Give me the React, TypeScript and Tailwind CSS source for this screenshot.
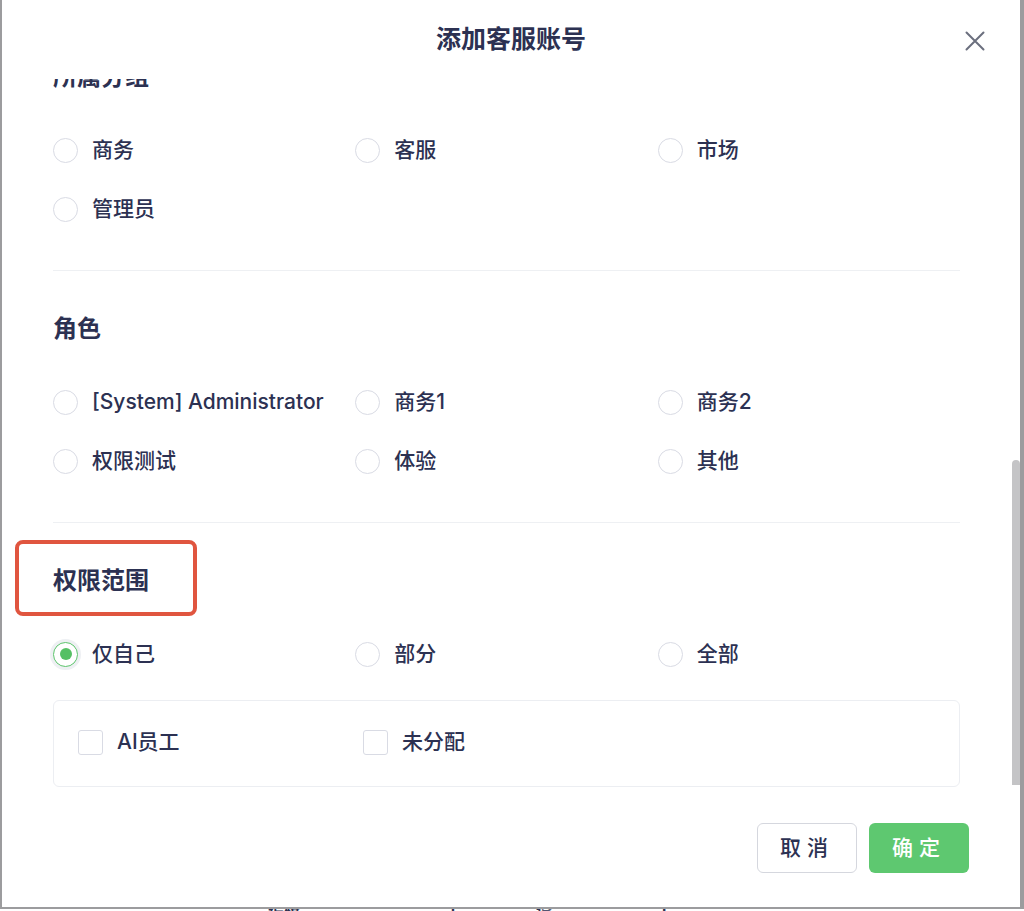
import React from 'react';

const font = { fontFamily: 'Inter, "Noto Sans CJK SC", "Noto Sans", sans-serif' };

type Option = { label: string; checked?: boolean };

const groupOptions: Option[] = [
  { label: '商务' },
  { label: '客服' },
  { label: '市场' },
  { label: '管理员' },
];

const roleOptions: Option[] = [
  { label: '[System] Administrator' },
  { label: '商务1' },
  { label: '商务2' },
  { label: '权限测试' },
  { label: '体验' },
  { label: '其他' },
];

const scopeOptions: Option[] = [
  { label: '仅自己', checked: true },
  { label: '部分' },
  { label: '全部' },
];

function Radio({ label, checked }: Option) {
  return (
    <label className="flex h-[26px] items-center gap-[14px]">
      {checked ? (
        <span className="flex h-[25px] w-[25px] items-center justify-center rounded-full border border-[#5cc46c] bg-white shadow-[0_0_0_3px_#eef0f3]">
          <span className="h-[12px] w-[12px] rounded-full bg-[#55c064]" />
        </span>
      ) : (
        <span className="h-[25px] w-[25px] rounded-full border border-[#d9dbe4] bg-white" />
      )}
      <span className="whitespace-nowrap text-[21px] font-medium leading-[26px] text-[#2c3152]">{label}</span>
    </label>
  );
}

function Checkbox({ label }: { label: string }) {
  return (
    <label className="flex w-[285px] items-center gap-[14px]">
      <span className="h-[25px] w-[25px] rounded-[3px] border border-[#d9dbe4] bg-white" />
      <span className="text-[21px] font-medium leading-[26px] text-[#2c3152]">{label}</span>
    </label>
  );
}

function Section({
  title,
  options,
  first,
  highlight,
}: {
  title: string;
  options: Option[];
  first?: boolean;
  highlight?: boolean;
}) {
  return (
    <div>
      <div className={`relative h-[30px] ${first ? '' : 'mt-[43px]'}`}>
        <h3 className="text-[24px] font-bold leading-[30px] text-[#2c3152]">{title}</h3>
        {highlight && (
          <div className="absolute left-[-38px] top-[-26px] h-[76px] w-[182px] rounded-[8px] border-[4px] border-[#e0553f]" />
        )}
      </div>
      <div className="mt-[45px] grid grid-cols-3 gap-y-[33px]">
        {options.map((o) => (
          <Radio key={o.label} {...o} />
        ))}
      </div>
    </div>
  );
}

export default function App() {
  return (
    <div className="h-[911px] w-[1024px] overflow-hidden bg-white" style={font}>
      <div className="relative flex h-[909px] flex-col border-b-2 border-l-2 border-r-4 border-[#9c9c9e] bg-white">
        {/* Header */}
        <div className="relative z-10 flex h-[79px] shrink-0 items-center justify-center bg-white">
          <h2 className="text-[25px] font-semibold text-[#2c3152]">添加客服账号</h2>
          <button className="absolute right-[35px] top-[31px] text-[#6b6f7e]">
            <svg width="20" height="20" viewBox="0 0 20 20" fill="none" stroke="currentColor" strokeWidth="2" strokeLinecap="round">
              <path d="M1.5 1.5L18.5 18.5M18.5 1.5L1.5 18.5" />
            </svg>
          </button>
        </div>

        {/* Body */}
        <div className="relative h-[721px] shrink-0 overflow-hidden">
          <div className="-mt-[17px] pl-[51px] pr-[60px]">
            <Section title="所属分组" options={groupOptions} first />
            <div className="mt-[48px] h-px bg-[#eef0f3]" />
            <Section title="角色" options={roleOptions} />
            <div className="mt-[48px] h-px bg-[#eef0f3]" />
            <Section title="权限范围" options={scopeOptions} highlight />
            <div className="mt-[33px] flex h-[87px] items-center rounded-[6px] border border-[#eceef2] px-[24px] pb-[3px]">
              <Checkbox label="AI员工" />
              <Checkbox label="未分配" />
            </div>
          </div>
          {/* scrollbar */}
          <div className="absolute right-0 top-[381px] h-[325px] w-[8px] rounded-t-[4px] bg-[#c4c4c6]" />
        </div>

        {/* Footer */}
        <div className="flex flex-1 justify-end gap-[12px] pr-[51px] pt-[23px]">
          <button className="h-[50px] w-[100px] rounded-[6px] border border-[#d5d7de] bg-white text-[21px] font-medium tracking-[6px] text-[#2c3152]">
            取消
          </button>
          <button className="h-[50px] w-[100px] rounded-[6px] bg-[#5ec870] text-[21px] font-medium tracking-[6px] text-white">
            确定
          </button>
        </div>
      </div>
      {/* page behind the dialog */}
      <div className="relative h-[2px] overflow-hidden">
        <div className="absolute left-[268px] top-0 text-[16px] font-bold leading-[4px] text-[#2c3152]">
          <span>编辑</span>
          <span className="ml-[150px]">|</span>
          <span className="ml-[80px]">设</span>
          <span className="ml-[110px]">l</span>
        </div>
      </div>
    </div>
  );
}
